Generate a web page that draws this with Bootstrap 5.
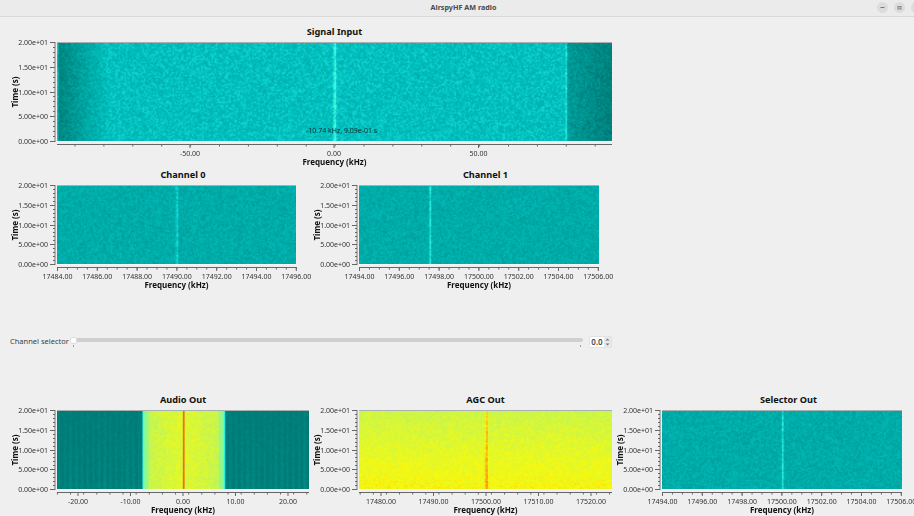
<!DOCTYPE html>
<html lang="en">
<head>
    <meta charset="UTF-8">
    <meta name="viewport" content="width=device-width, initial-scale=1.0">
    <title>AirspyHF AM radio</title>
    <link href="https://cdn.jsdelivr.net/npm/bootstrap@5.3.0/dist/css/bootstrap.min.css" rel="stylesheet">
    <style>
        html, body { height: 100%; overflow: hidden; }
        body { background: #efefef; font-family: "Noto Sans", "Open Sans", sans-serif; color: #222; }
        .title-bar { height: 17px; background: #ebebeb; border-bottom: 1px solid #d9d9d9; }
        .title-text { padding-left: 50px; font-size: 7.2px; line-height: 15px; font-weight: 700; color: #4a4a4a; }
        .win-btn { width: 11px; height: 11px; margin-top: 2px; border-radius: 50%; background: #dcdcdc; }
        .win-btns { gap: 6px; margin-right: -8px; }
        .plots { padding: 5px 0 0 10px; }
        .plot-row-gap-a { gap: 16px; }
        .plot-row-gap-b { gap: 3px; }
        .plot-title { height: 20px; margin-left: 47px; font-size: 9.2px; line-height: 20px; font-weight: 700; color: #111; text-align: center; white-space: nowrap; }
        .y-axis, .x-axis { display: block; overflow: visible; flex: none; filter: blur(.15px); }
        .x-axis { margin-left: 47px; }
        .spec { display: block; flex: none; }
        .spec-wrap { position: relative; }
        .tick-text { font-size: 7px; fill: #333; }
        .axis-text { font-size: 8px; font-weight: 700; fill: #111; }
        .cursor-text { position: absolute; left: 296px; top: 83px; font-size: 7px; line-height: 11px; color: #0c2a2a; white-space: nowrap; }
        .selector-row { height: 14px; margin: 47px 0 41px; width: 602px; }
        .selector-label { width: 64px; font-size: 7.5px; color: #3c3c3c; white-space: nowrap; }
        .selector-track { position: relative; width: 509px; height: 4px; margin-top: -4px; background: #cfcfcf; border-radius: 2px; }
        .selector-handle { position: absolute; left: -4px; top: -1px; width: 7px; height: 7px; background: #fff; border: 1px solid #ddd; border-radius: 2px; }
        .selector-mark { position: absolute; top: 7px; width: 1px; height: 2px; background: #8fa3bb; }
        .spin-box { width: 23px; height: 12px; margin-left: 6px; background: #fff; border: 1px solid #e2e2e2; border-radius: 2px; font-size: 8px; line-height: 10px; color: #444; }
        .spin-value { width: 15px; text-align: center; font-weight: 600; }
        .spin-arrows { width: 7px; background: #e8e8e8; }
    </style>
</head>
<body>
    <div class="title-bar d-flex">
        <div class="title-text flex-grow-1 text-center">AirspyHF AM radio</div>
        <div class="win-btns d-flex">
            <div class="win-btn d-flex align-items-center justify-content-center">
                <svg width="7" height="7" viewBox="0 0 7 7"><path d="M1.5 3.5h4" stroke="#777" fill="none"/></svg>
            </div>
            <div class="win-btn d-flex align-items-center justify-content-center">
                <svg width="7" height="7" viewBox="0 0 7 7"><path d="M1.5 2h4v3.5h-4z" fill="#888"/><path d="M2.5 3.2h2v1.2h-2z" fill="#ddd"/></svg>
            </div>
            <div class="win-btn d-flex align-items-center justify-content-center">
                <svg width="7" height="7" viewBox="0 0 7 7"><path d="M1.5 1.5l4 4m0-4l-4 4" stroke="#777" fill="none"/></svg>
            </div>
        </div>
    </div>

    <div class="plots">
        <div class="d-flex" id="rowTop"></div>
        <div class="d-flex plot-row-gap-a" id="rowChannels"></div>

        <div class="selector-row d-flex align-items-center">
            <div class="selector-label">Channel selector</div>
            <div class="selector-track">
                <div class="selector-mark" style="left: -1px"></div>
                <div class="selector-mark" style="left: 506px"></div>
                <div class="selector-handle"></div>
            </div>
            <div class="spin-box d-flex">
                <div class="spin-value">0.0</div>
                <div class="spin-arrows">
                    <svg width="7" height="10" viewBox="0 0 7 10" class="d-block"><path d="M3.5 1.5l2 2h-4zM3.5 8.5l2-2h-4z" fill="#777"/></svg>
                </div>
            </div>
        </div>

        <div class="d-flex plot-row-gap-b" id="rowOutputs"></div>
    </div>

    <script src="https://cdn.jsdelivr.net/npm/bootstrap@5.3.0/dist/js/bootstrap.bundle.min.js"></script>
    <script>
        // colour scale of the waterfall, value 0..1
        const stops = [
            [0.00, 0, 90, 90], [0.17, 0, 122, 118], [0.30, 0, 172, 168], [0.36, 0, 195, 195],
            [0.46, 60, 255, 235], [0.60, 190, 245, 90], [0.72, 250, 250, 10],
            [0.86, 250, 140, 20], [1.00, 245, 60, 20]
        ];
        const GRAIN = 1.5;

        function colour(v) {
            v = Math.min(1, Math.max(0, v));
            for (let i = 1; i < stops.length; i++) {
                if (v <= stops[i][0]) {
                    const a = stops[i - 1], b = stops[i];
                    const t = (v - a[0]) / (b[0] - a[0]);
                    return [1, 2, 3].map(k => a[k] + (b[k] - a[k]) * t);
                }
            }
            return stops[stops.length - 1].slice(1);
        }

        let seed = 12345;
        function rnd() {
            seed = (seed + 0x6D2B79F5) | 0;
            let t = Math.imul(seed ^ (seed >>> 15), 1 | seed);
            t = (t + Math.imul(t ^ (t >>> 7), 61 | t)) ^ t;
            return ((t ^ (t >>> 14)) >>> 0) / 4294967296;
        }

        function peak(x, at, width) {
            const d = (x - at) / width;
            return Math.exp(-d * d);
        }

        // each plot gives its signal level for x (px), y (0..1 top to bottom)
        function signalInput(x, y) {
            let v = 0.35;
            if (x < 50) v = 0.19 + 0.16 * Math.pow(x / 50, 0.9);
            if (x < 1.5) v = 0.36;
            if (x > 509) v = 0.255 - 0.07 * (x - 509) / 46;
            v += 0.12 * peak(x, 277, 1.3) * (0.9 + 0.2 * rnd());
            v += 0.07 * peak(x, 508.7, 1.2);
            return v + (rnd() - 0.5) * 0.09;
        }

        function channelPlot(lineAt) {
            return (x, y) => 0.3 + 0.13 * peak(x, lineAt, 0.9) * (0.75 + 0.4 * rnd()) + (rnd() - 0.5) * 0.075;
        }

        function audioOut(x, y) {
            const d = Math.abs(x - 126);
            let v = 0.18 + 0.006 * Math.sin(x * 1.1) + (rnd() - 0.5) * 0.025 + 0.025 * y * (Math.sin(x * 1.1) > 0.4 ? 1 : 0);
            if (d < 42) {
                v = d > 39 ? 0.46 : d > 35 ? 0.55 : 0.62 + 0.05 * (1 - d / 35) + (rnd() - 0.5) * 0.08;
            }
            if (d < 1.1) v = 0.97;
            return v;
        }

        function agcOut(x, y) {
            let v = 0.63 + 0.09 * y + (rnd() - 0.5) * 0.075;
            v += 0.2 * peak(x, 127, 1.1) * (0.7 + 0.4 * rnd());
            return v;
        }

        function drawSpectrum(canvas, level) {
            const w = canvas.width, h = canvas.height;
            const small = document.createElement("canvas");
            small.width = Math.ceil(w / GRAIN);
            small.height = Math.ceil(h / GRAIN);
            const sc = small.getContext("2d");
            const img = sc.createImageData(small.width, small.height);
            for (let j = 0; j < small.height; j++) {
                for (let i = 0; i < small.width; i++) {
                    const c = colour(level(i * GRAIN, j / small.height));
                    const p = (j * small.width + i) * 4;
                    img.data[p] = c[0];
                    img.data[p + 1] = c[1];
                    img.data[p + 2] = c[2];
                    img.data[p + 3] = 255;
                }
            }
            sc.putImageData(img, 0, 0);
            const ctx = canvas.getContext("2d");
            ctx.imageSmoothingEnabled = true;
            ctx.drawImage(small, 0, 0, w, h);
            // frame of the plot canvas
            ctx.fillStyle = "#a9b0b0";
            ctx.fillRect(0, 0, w, 1);
            ctx.fillStyle = "#f4f8f8";
            ctx.fillRect(0, h - 1, w, 1);
        }

        function yAxis(h) {
            const names = ["2.00e+01", "1.50e+01", "1.00e+01", "5.00e+00", "0.00e+00"];
            let out = `<text class="axis-text" text-anchor="middle" transform="translate(4 ${h / 2}) rotate(-90)" dominant-baseline="central">Time (s)</text>`;
            out += `<path d="M45 0V${h}" stroke="#777" fill="none"/>`;
            for (let i = 0; i <= 20; i++) {
                const y = Math.round(i * (h - 1) / 20) + 0.5;
                const major = i % 5 === 0;
                out += `<path d="M${major ? 40 : 43} ${y}H45" stroke="#666" fill="none"/>`;
                if (major) {
                    out += `<text class="tick-text" x="38" y="${y}" text-anchor="end" dominant-baseline="central">${names[i / 5]}</text>`;
                }
            }
            return out;
        }

        function xAxis(p) {
            const w = p.width;
            let out = `<path d="M0 2.5H${w}" stroke="#666" fill="none"/>`;
            for (const t of p.minor) {
                out += `<path d="M${t} 2V4.5" stroke="#666" fill="none"/>`;
            }
            for (const t of p.ticks) {
                out += `<path d="M${t[0]} 2V6" stroke="#666" fill="none"/>`;
                out += `<text class="tick-text" x="${t[0]}" y="11" text-anchor="middle" dominant-baseline="central">${t[1]}</text>`;
            }
            out += `<text class="axis-text" x="${w / 2}" y="19" text-anchor="middle" dominant-baseline="central">Frequency (kHz)</text>`;
            return out;
        }

        function spaced(from, step, count, text) {
            const list = [];
            for (let i = 0; i < count; i++) {
                list.push(from + i * step);
            }
            return text ? list.map((x, i) => [x, text(i)]) : list;
        }

        function narrowTicks(first) {
            return spaced(0.5, 39.8, 7, i => (first + i * 2) + ".00");
        }

        const plots = [
            {
                row: "rowTop", name: "Signal Input", width: 555, height: 100, level: signalInput, cursor: "-10.74 kHz, 9.09e-01 s",
                ticks: [[133, "-50.00"], [277, "0.00"], [421.5, "50.00"]],
                minor: spaced(18, 28.9, 19)
            },
            {
                row: "rowChannels", name: "Channel 0", width: 239, height: 80, level: channelPlot(119.5), titleShift: 13,
                ticks: narrowTicks(17484), minor: spaced(0.5, 9.95, 25)
            },
            {
                row: "rowChannels", name: "Channel 1", width: 240, height: 80, level: channelPlot(70.5), titleShift: 13,
                ticks: narrowTicks(17494), minor: spaced(0.5, 9.95, 25)
            },
            {
                row: "rowOutputs", name: "Audio Out", width: 252, height: 80, level: audioOut,
                ticks: [[21, "-20.00"], [73.5, "-10.00"], [126, "0.00"], [178.5, "10.00"], [231, "20.00"]],
                minor: spaced(0.4, 13.125, 20)
            },
            {
                row: "rowOutputs", name: "AGC Out", width: 253, height: 80, level: agcOut,
                ticks: [[22, "17480.00"], [74.5, "17490.00"], [127, "17500.00"], [179.5, "17510.00"], [232, "17520.00"]],
                minor: spaced(1.2, 13.125, 20)
            },
            {
                row: "rowOutputs", name: "Selector Out", width: 240, height: 80, level: channelPlot(120), titleShift: 13,
                ticks: narrowTicks(17494), minor: spaced(0.5, 9.95, 25)
            }
        ];

        plots.forEach(p => {
            const box = document.createElement("div");
            box.style.width = (p.width + 47) + "px";
            box.innerHTML = `
                <div class="plot-title" style="padding-left: ${p.titleShift || 0}px">${p.name}</div>
                <div class="d-flex spec-wrap">
                    <svg class="y-axis" width="47" height="${p.height}">${yAxis(p.height)}</svg>
                    <canvas class="spec" width="${p.width}" height="${p.height}"></canvas>
                    ${p.cursor ? `<div class="cursor-text">${p.cursor}</div>` : ""}
                </div>
                <svg class="x-axis" width="${p.width}" height="23">${xAxis(p)}</svg>
            `;
            document.getElementById(p.row).appendChild(box);
            drawSpectrum(box.querySelector("canvas"), p.level);
        });
    </script>
</body>
</html>
